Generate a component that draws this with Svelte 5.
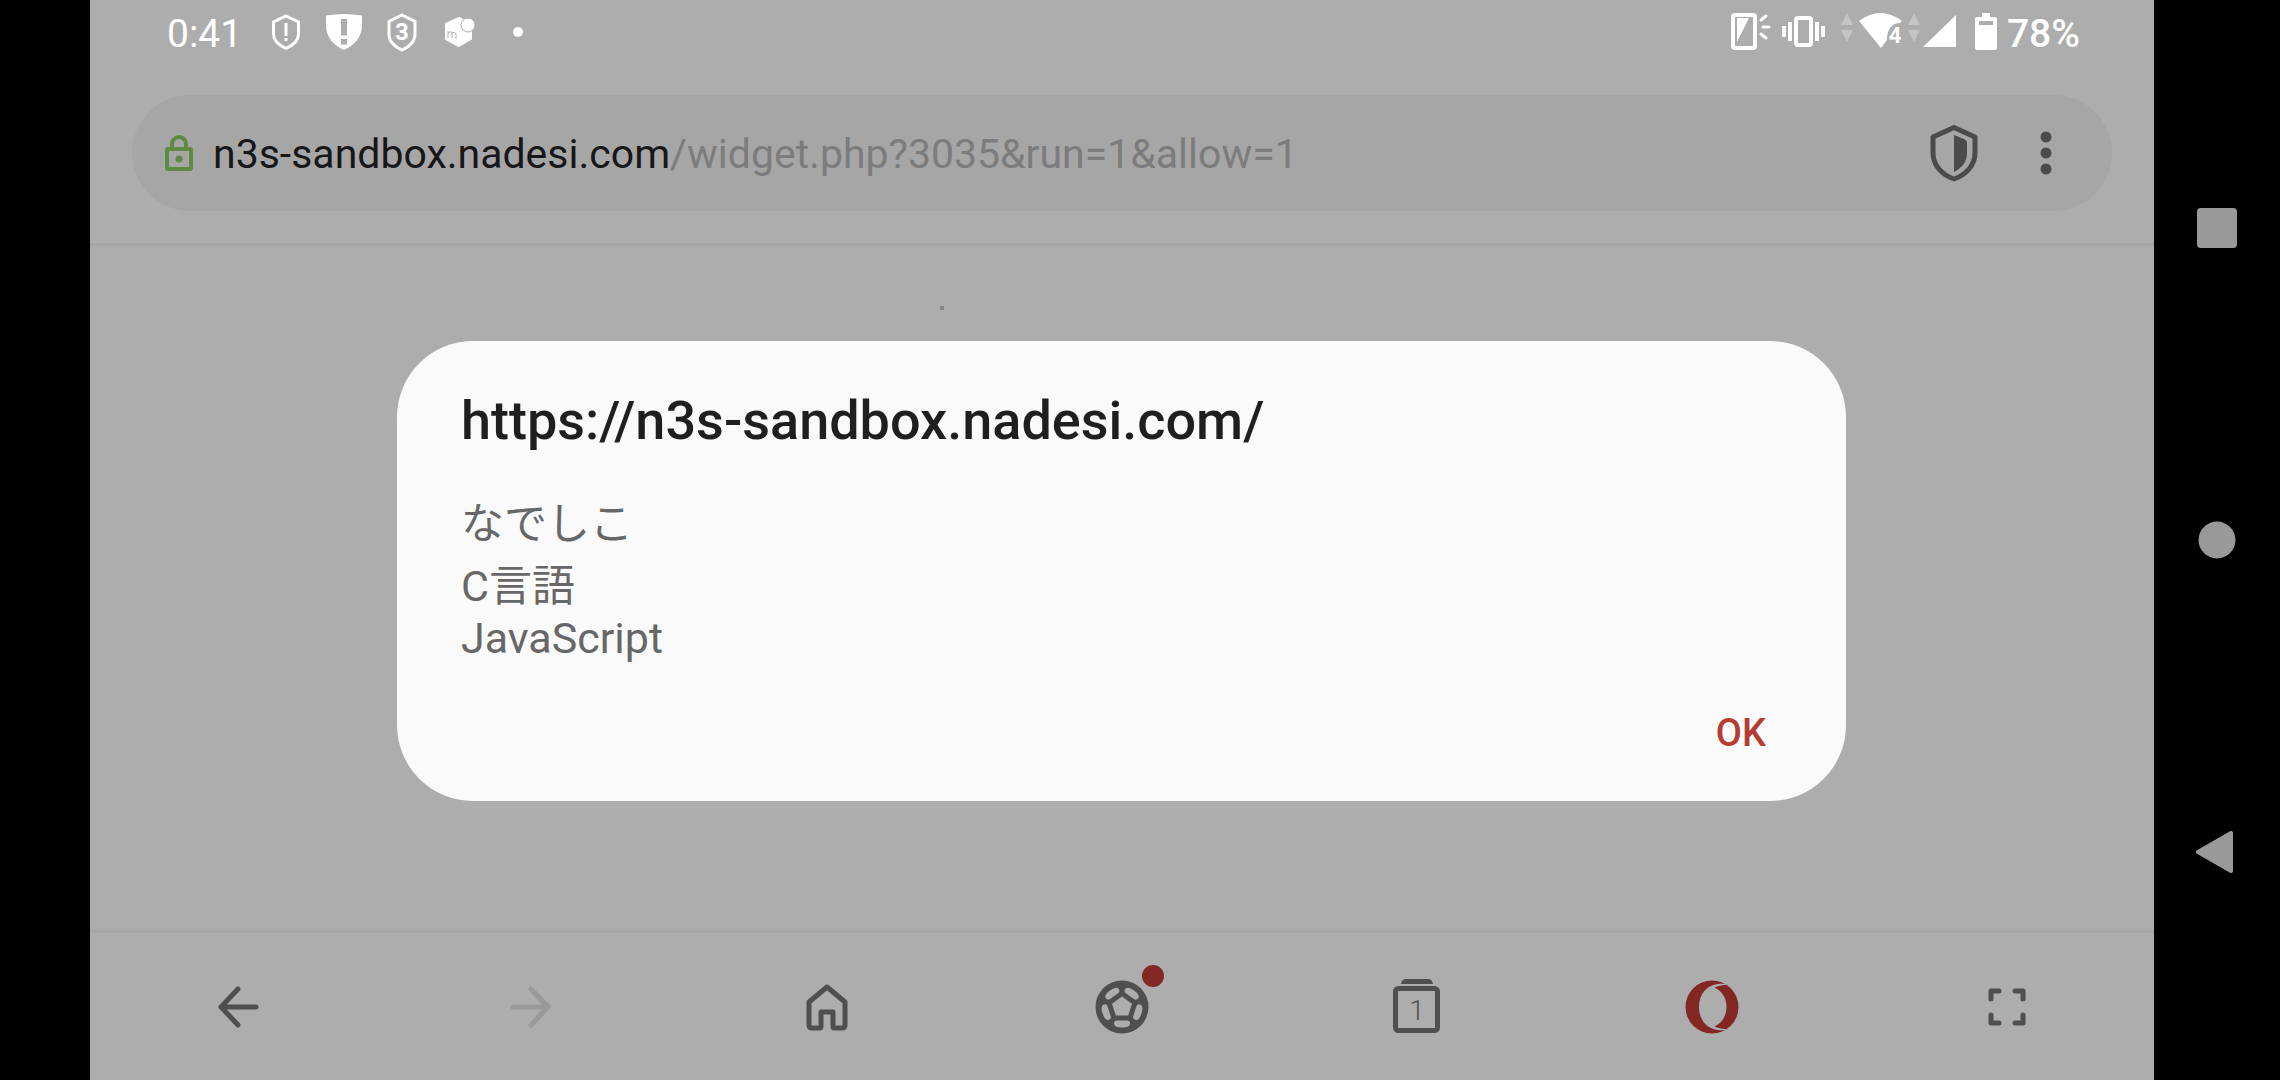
<script>
  let showDialog = true
  const host = 'n3s-sandbox.nadesi.com'
  const path = '/widget.php?3035&run=1&allow=1'
  const lines = ['なでしこ', 'C言語', 'JavaScript']

  const closeDialog = () => {
    showDialog = false
  }
</script>

<div class="screen">
  <div class="cutout"></div>

  <div class="browser">
    <header class="status">
      <span class="clock">0:41</span>
      <div class="notices">
        <svg width="36" height="40" viewBox="0 0 36 40">
          <path d="M18 4 30.500 10v12c0 6-5 11-12.500 14.500C10.500 33 5.500 28 5.500 22V10z" fill="none" stroke="#fff" stroke-width="3" />
          <path d="M16.500 11h3v13h-3zM16.500 26h3v3h-3z" fill="#fff" />
        </svg>
        <svg width="36" height="40" viewBox="0 0 36 40">
          <path fill-rule="evenodd" d="M0 3.500Q18 .5 36 3.500V13c0 12-7 20-18 25C7 33 0 25 0 13zM15 7v16.500h6V7zm0 20v5.500h6V27z" fill="#fff" />
        </svg>
        <svg width="36" height="40" viewBox="0 0 36 40">
          <path d="M18 3 31 9.500v13c0 7-5.500 12-13 15.500C10.500 34.500 5 29.500 5 22.500v-13z" fill="none" stroke="#fff" stroke-width="3" />
          <text x="18" y="28" text-anchor="middle" class="badge-num">3</text>
        </svg>
        <svg width="36" height="40" viewBox="0 0 36 40">
          <path d="M4 12 17 6l12 6v15l-12 7-13-7z" fill="#fff" stroke="#fff" stroke-width="2" stroke-linejoin="round" />
          <circle cx="26" cy="13" r="7" fill="#fff" stroke="#adadad" stroke-width="1" />
          <path d="M6 26v-7M6 21q3-3 4 0v5M10 21q3-2 4 1v5" fill="none" stroke="#adadad" stroke-width="1" />
        </svg>
        <svg width="36" height="40" viewBox="0 0 36 40">
          <circle cx="18" cy="20" r="5" fill="#fff" />
        </svg>
      </div>

      <div class="system">
        <svg width="226" height="40" viewBox="0 0 226 40">
          <rect x="2" y="3" width="22" height="33" rx="2" fill="none" stroke="#fff" stroke-width="4" />
          <path d="M6 6h12L6 30z" fill="#fff" />
          <path d="m30 8 5-4M32 15h6M30 22l5 4" stroke="#fff" stroke-width="3" stroke-linecap="round" />
          <rect x="65" y="6" width="15" height="27" rx="2" fill="none" stroke="#fff" stroke-width="4" />
          <path d="M53 14v11M59 10v19M86 10v19M92 14v11" stroke="#fff" stroke-width="4" />
          <path d="m110 13 6-12 6 12zM110 18h12l-6 12z" fill="#c4c4c4" />
          <path d="M128 9q21.500-16 43 0l-2 2c-8 0-13 6-13 17l-6 8z" fill="#fff" />
          <text x="164" y="31" text-anchor="middle" class="wifi-num">4</text>
          <path d="m177 13 6-12 6 12zM177 18h12l-6 12z" fill="#c4c4c4" />
          <path d="M225 3v32h-33z" fill="#fff" />
        </svg>
        <svg width="22" height="40" viewBox="0 0 22 40">
          <path fill-rule="evenodd" d="M7 1h8v4h5q2 0 2 2v29q0 2-2 2H2q-2 0-2-2V7q0-2 2-2h5zM4 9v4h14V9z" fill="#fff" />
        </svg>
        <span>78%</span>
      </div>
    </header>

    <div class="toolbar">
      <div class="address">
        <svg class="lock" width="28" height="36" viewBox="0 0 28 36">
          <rect x="2" y="14" width="24" height="20" rx="1" fill="none" stroke="#5e8b42" stroke-width="4" />
          <path d="M7 14V9a7 7 0 0 1 14 0v5" fill="none" stroke="#5e8b42" stroke-width="4" />
          <circle cx="14" cy="24" r="3.500" fill="#5e8b42" />
        </svg>
        <a class="url" href="https://{host}{path}">{host}<span>{path}</span></a>
        <button class="tool" aria-label="Ad blocker">
          <svg width="48" height="58" viewBox="0 0 48 58">
            <path d="m24 3.500 21 9.500v16c0 12-9 22-21 26C12 51 3 41 3 29V13z" fill="none" stroke="#4b4b4b" stroke-width="5" stroke-linejoin="round" />
            <path d="m24 11 10 4q3 1 3 4v10c0 9-5 15-13 19z" fill="#4b4b4b" />
          </svg>
        </button>
        <button class="tool" aria-label="Menu">
          <svg width="12" height="46" viewBox="0 0 12 46">
            <g fill="#4b4b4b"><circle cx="6" cy="7" r="5.500" /><circle cx="6" cy="23" r="5.500" /><circle cx="6" cy="39" r="5.500" /></g>
          </svg>
        </button>
      </div>
    </div>

    <main class="page">
      <span class="speck"></span>
      {#if showDialog}
        <div class="dialog" role="alertdialog" aria-labelledby="dialog-title">
          <h1 id="dialog-title">https://{host}/</h1>
          <div class="message">
            {#each lines as line}
              <p>{line}</p>
            {/each}
          </div>
          <button class="ok" on:click={closeDialog}>OK</button>
        </div>
      {/if}
    </main>

    <nav class="bottom">
      <button aria-label="Back">
        <svg width="56" height="56" viewBox="0 0 56 56">
          <path d="M47 28H12M29 10 12 28l17 18" class="line" />
        </svg>
      </button>
      <button aria-label="Forward" disabled>
        <svg width="56" height="56" viewBox="0 0 56 56">
          <path d="M9 28h35M27 10l17 18-17 18" class="line off" />
        </svg>
      </button>
      <button aria-label="Home">
        <svg width="56" height="56" viewBox="0 0 56 56">
          <path d="M28 8 46 23v23q0 3-3 3h-8q-1 0-1-2V33H22v14q0 2-1 2h-8q-3 0-3-3V23z" class="line" />
        </svg>
      </button>
      <button aria-label="Football">
        <svg width="56" height="56" viewBox="0 0 56 56">
          <circle cx="28" cy="28" r="26.500" fill="#4f4f4f" />
          <path d="m28 17.500 10 7.300-3.800 11.700H21.800L18 24.800z" fill="#adadad" />
          {#each [0, 72, 144, 216, 288] as angle}
            <path d="M23 41.500h10q3 0 3 3 0 4-8 4t-8-4q0-3 3-3z" fill="#adadad" transform="rotate({angle} 28 28)" />
          {/each}
        </svg>
        <i class="dot"></i>
      </button>
      <button aria-label="Tabs">
        <svg width="56" height="56" viewBox="0 0 56 56">
          <path d="M12 5q1-5 5-5h22q4 0 5 5z" fill="#4f4f4f" />
          <rect x="6.500" y="9.500" width="42" height="42" rx="3" class="line" />
          <text x="28" y="41" text-anchor="middle" class="tab-num">1</text>
        </svg>
      </button>
      <button aria-label="Opera">
        <svg width="56" height="56" viewBox="0 0 56 56">
          <path fill-rule="evenodd" d="M28 1.500a26.500 26.500 0 1 0 0 53 26.500 26.500 0 1 0 0-53zM44 6C40 4.500 36 4.500 34 5 23 6 15 15 15 28s8 22 19 23c2 .5 6 .5 10-1-5 0-9-.5-13.500-2.500C38 44 42.500 37 42.500 28S38 12 30.500 8.500C35 6.500 39 6 44 6z" fill="#822724" />
        </svg>
      </button>
      <button aria-label="Full screen">
        <svg width="56" height="56" viewBox="0 0 56 56">
          <path d="M12 20v-8h8M36 12h8v8M44 36v8h-8M20 44h-8v-8" class="line" />
        </svg>
      </button>
    </nav>
  </div>

  <aside class="system-nav">
    <button aria-label="Recent apps">
      <svg width="42" height="42" viewBox="0 0 42 42"><rect x="1" y="1" width="40" height="40" rx="4" /></svg>
    </button>
    <button aria-label="Home screen">
      <svg width="42" height="42" viewBox="0 0 42 42"><circle cx="21" cy="21" r="18.500" /></svg>
    </button>
    <button aria-label="System back">
      <svg width="42" height="42" viewBox="0 0 42 42"><path d="M2 21 35 2v38z" stroke="#999" stroke-width="4" stroke-linejoin="round" /></svg>
    </button>
  </aside>
</div>

<style>
  :global(body) {
    margin: 0;
    background: #000;
  }
  .screen {
    display: flex;
    min-height: 100vh;
    font-family: Roboto, 'Noto Sans CJK JP', sans-serif;
  }
  .cutout {
    width: 90px;
    background: #000;
  }
  .browser {
    flex: 1;
    display: flex;
    flex-direction: column;
    background: #adadad;
  }
  button {
    border: none;
    padding: 0;
    background: none;
    font-family: inherit;
  }
  svg {
    display: block;
  }
  .status {
    display: flex;
    align-items: center;
    padding: 12px 74px 0 77px;
    height: 52px;
    box-sizing: border-box;
    margin-bottom: 43px;
    color: #fff;
    font-size: 39px;
    line-height: 40px;
  }
  .clock,
  .system span {
    padding-top: 3px;
  }
  .notices {
    display: flex;
    gap: 22px;
    margin-left: 26px;
  }
  .system {
    display: flex;
    align-items: center;
    gap: 18px;
    margin-left: auto;
  }
  .system span {
    margin-left: -8px;
    font-weight: 500;
  }
  .badge-num {
    fill: #fff;
    font-size: 24px;
    font-weight: 700;
  }
  .wifi-num {
    fill: #fff;
    font-size: 22px;
    font-weight: 700;
  }
  .toolbar {
    padding: 0 42px 32px;
    border-bottom: 3px solid #a5a5a5;
  }
  .address {
    display: flex;
    align-items: center;
    height: 116px;
    padding: 0 60px 0 33px;
    box-sizing: border-box;
    border-radius: 58px;
    background: #a6a6a6;
  }
  .url {
    flex: 1;
    margin-left: 20px;
    padding-top: 2px;
    color: #171717;
    font-size: 41px;
    text-decoration: none;
  }
  .url span {
    color: #7c7c7c;
  }
  .tool + .tool {
    margin-left: 62px;
  }
  .page {
    flex: 1;
    display: flex;
    align-items: flex-start;
    justify-content: center;
    position: relative;
    padding: 95px 308px 128px 307px;
  }
  .speck {
    position: absolute;
    top: 60px;
    left: 41.2%;
    width: 4px;
    height: 4px;
    background: #858585;
  }
  .dialog {
    flex: 1;
    display: flex;
    flex-direction: column;
    padding: 48px 64px;
    border-radius: 76px;
    background: #fafafa;
  }
  h1 {
    margin: 0 0 36px;
    color: #1f1f1f;
    font-size: 54px;
    font-weight: 500;
    line-height: 64px;
  }
  .message {
    color: #676767;
    font-size: 43px;
  }
  p {
    margin: 0;
  }
  .ok {
    align-self: flex-end;
    margin-top: 50px;
    padding: 0 16px;
    color: #b83a34;
    font-size: 38px;
    font-weight: 500;
    line-height: 40px;
  }
  .bottom {
    display: flex;
    height: 147px;
    border-top: 3px solid #a7a7a7;
  }
  .bottom button {
    flex: 1;
    display: flex;
    align-items: center;
    justify-content: center;
    position: relative;
  }
  .line {
    fill: none;
    stroke: #4f4f4f;
    stroke-width: 5;
    stroke-linecap: round;
    stroke-linejoin: round;
  }
  .off {
    stroke: #999;
  }
  .dot {
    position: absolute;
    top: 32px;
    left: calc(50% + 20px);
    width: 22px;
    height: 22px;
    border-radius: 50%;
    background: #822724;
  }
  .tab-num {
    fill: #4f4f4f;
    font-size: 27px;
    font-weight: 300;
  }
  .system-nav {
    display: flex;
    flex-direction: column;
    width: 126px;
    padding: 72px 0;
    box-sizing: border-box;
    background: #000;
  }
  .system-nav button {
    flex: 1;
    display: flex;
    align-items: center;
    justify-content: center;
  }
  .system-nav svg {
    fill: #999;
  }
</style>
